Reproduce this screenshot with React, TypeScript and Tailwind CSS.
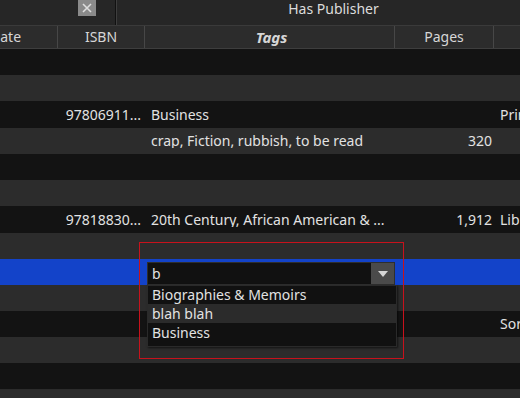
import React from "react";

type Row = {
  h: string;
  bg: string;
  isbn?: string;
  tags?: string;
  pages?: string;
  last?: string;
};

const rows: Row[] = [
  { h: "h-[26px]", bg: "bg-[#131313]" },
  { h: "h-[26px]", bg: "bg-[#2c2c2c]" },
  { h: "h-[27px]", bg: "bg-[#131313]", isbn: "97806911...", tags: "Business", last: "Prin" },
  { h: "h-[26px]", bg: "bg-[#2c2c2c]", tags: "crap, Fiction, rubbish, to be read", pages: "320" },
  { h: "h-[26px]", bg: "bg-[#131313]" },
  { h: "h-[26px]", bg: "bg-[#2c2c2c]" },
  { h: "h-[27px]", bg: "bg-[#131313]", isbn: "97818830...", tags: "20th Century, African American & ...", pages: "1,912", last: "Lib" },
  { h: "h-[26px]", bg: "bg-[#2c2c2c]" },
  { h: "h-[26px]", bg: "bg-[#1343c9]" },
  { h: "h-[26px]", bg: "bg-[#2c2c2c]" },
  { h: "h-[26px]", bg: "bg-[#131313]", last: "Sor" },
  { h: "h-[26px]", bg: "bg-[#2c2c2c]" },
  { h: "h-[26px]", bg: "bg-[#131313]" },
  { h: "h-[26px]", bg: "bg-[#2c2c2c]" },
];

export default function App() {
  return (
    <div className="relative w-[520px] h-[398px] overflow-hidden bg-[#131313] text-[14px] text-[#e2e2e2] font-['Noto_Sans','Open_Sans',sans-serif] leading-none">
      {/* toolbar */}
      <div className="flex h-[26px] bg-[#262626] border-b border-[#3a3a3a]">
        <div className="w-[115px] h-full relative">
          <div className="ml-[78px] w-[18px] h-[16px] bg-[#8a8a8a] flex items-center justify-center">
            <svg width="10" height="10" viewBox="0 0 10 10">
              <path d="M1 1 L9 9 M9 1 L1 9" stroke="#dedede" strokeWidth="1.6" />
            </svg>
          </div>
        </div>
        <div className="w-[1px] h-full bg-[#111]" />
        <div className="w-[1px] h-full bg-[#3e3e3e]" />
        <div className="flex-1 flex justify-center pt-[2px] pl-[30px] text-[#dcdcdc]">Has Publisher</div>
      </div>
      {/* header */}
      <div className="flex h-[23px] bg-[#2c2c2c] border-b border-[#3e3e3e] text-[#d6d6d6]">
        <div className="w-[58px] shrink-0 overflow-hidden flex items-center border-r border-[#474747]">
          <span className="-ml-[10px]">Date</span>
        </div>
        <div className="w-[87px] shrink-0 flex items-center justify-center border-r border-[#474747]">ISBN</div>
        <div className="w-[250px] shrink-0 flex items-center justify-center border-r border-[#474747] font-bold italic text-[15px] pl-[4px]">Tags</div>
        <div className="w-[99px] shrink-0 flex items-center justify-center border-r border-[#474747]">Pages</div>
        <div className="flex-1" />
      </div>
      {/* rows */}
      <div className="flex flex-col">
        {rows.map((r, i) => (
          <div key={i} className={`flex items-center ${r.h} ${r.bg}`}>
            <div className="w-[58px] shrink-0" />
            <div className="w-[87px] shrink-0 text-right pr-[4px] whitespace-nowrap">{r.isbn}</div>
            <div className="w-[250px] shrink-0 pl-[6px] whitespace-nowrap overflow-hidden">{r.tags}</div>
            <div className="w-[99px] shrink-0 text-right pr-[2px]">{r.pages}</div>
            <div className="flex-1 pl-[6px] whitespace-nowrap overflow-hidden">{r.last}</div>
          </div>
        ))}
      </div>
      {/* red focus rectangle */}
      <div className="absolute left-[139px] top-[242px] w-[265px] h-[117px] border border-[#c8121c]" />
      {/* combo box */}
      <div className="absolute left-[147px] top-[262px] w-[250px]">
        <div className="flex h-[23px] w-[248px] bg-[#111111] border border-[#2e2e2e]">
          <div className="flex-1 flex items-center pl-[4px]">b</div>
          <div className="w-[23px] h-full bg-[#4a4a4a] flex items-center justify-center">
            <svg width="10" height="6" viewBox="0 0 10 6">
              <path d="M0 0 L10 0 L5 6 Z" fill="#d6d6d6" />
            </svg>
          </div>
        </div>
        <div className="flex flex-col bg-[#111111] border border-[#2a2a2a] pb-[4px] shadow-[1px_1px_2px_rgba(0,0,0,0.6)]">
          <div className="h-[18px] flex items-center pl-[4px]">Biographies &amp; Memoirs</div>
          <div className="h-[19px] flex items-center pl-[4px] bg-[#2b2b2b]">blah blah</div>
          <div className="h-[19px] flex items-center pl-[4px]">Business</div>
        </div>
      </div>
    </div>
  );
}
